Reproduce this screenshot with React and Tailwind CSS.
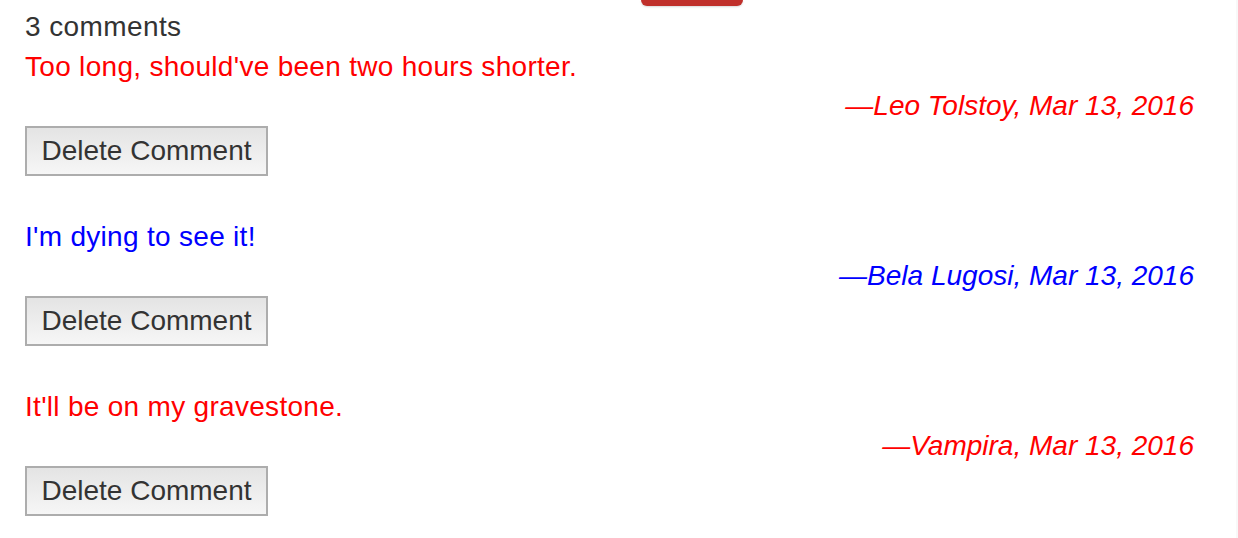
import React from 'react';

const comments = [
  { text: "Too long, should've been two hours shorter.", author: 'Leo Tolstoy', date: 'Mar 13, 2016', color: 'text-[#ff0000]' },
  { text: "I'm dying to see it!", author: 'Bela Lugosi', date: 'Mar 13, 2016', color: 'text-[#0000ff]' },
  { text: "It'll be on my gravestone.", author: 'Vampira', date: 'Mar 13, 2016', color: 'text-[#ff0000]' },
];

const Comment = ({ comment }) => (
  <div className="mb-[40px]">
    <p className={`${comment.color} leading-[40px] pt-[1px] -mb-[1px] tracking-[0.3px]`}>{comment.text}</p>
    <p className={`${comment.color} italic text-right leading-[40px]`}>
      —{comment.author}, {comment.date}
    </p>
    <button className="w-[243px] h-[50px] border-2 border-[#adadad] bg-gradient-to-b from-[#e4e4e4] to-[#f6f6f6] text-[#333] leading-[40px]">
      Delete Comment
    </button>
  </div>
);

export default function App() {
  return (
    <div className="flex w-[1238px] min-h-[538px] bg-white text-[28px] font-['Liberation_Sans',Arial,sans-serif]">
      <div className="flex-1">
        {/* edge of the header button above */}
        <div className="ml-[641px] w-[102px] h-[6px] rounded-b-[10px] bg-[#c0302b] shadow-[0_1px_2px_rgba(0,0,0,0.15)]" />
        <div className="pl-[25px] pr-[42px]">
          <p className="text-[#333] leading-[40px] pt-[1px] -mb-[1px] tracking-[0.4px]">3 comments</p>
          {comments.map((c, i) => (
            <Comment key={i} comment={c} />
          ))}
        </div>
      </div>
      <div className="w-[2px] bg-[#f8f8f8]" />
    </div>
  );
}
